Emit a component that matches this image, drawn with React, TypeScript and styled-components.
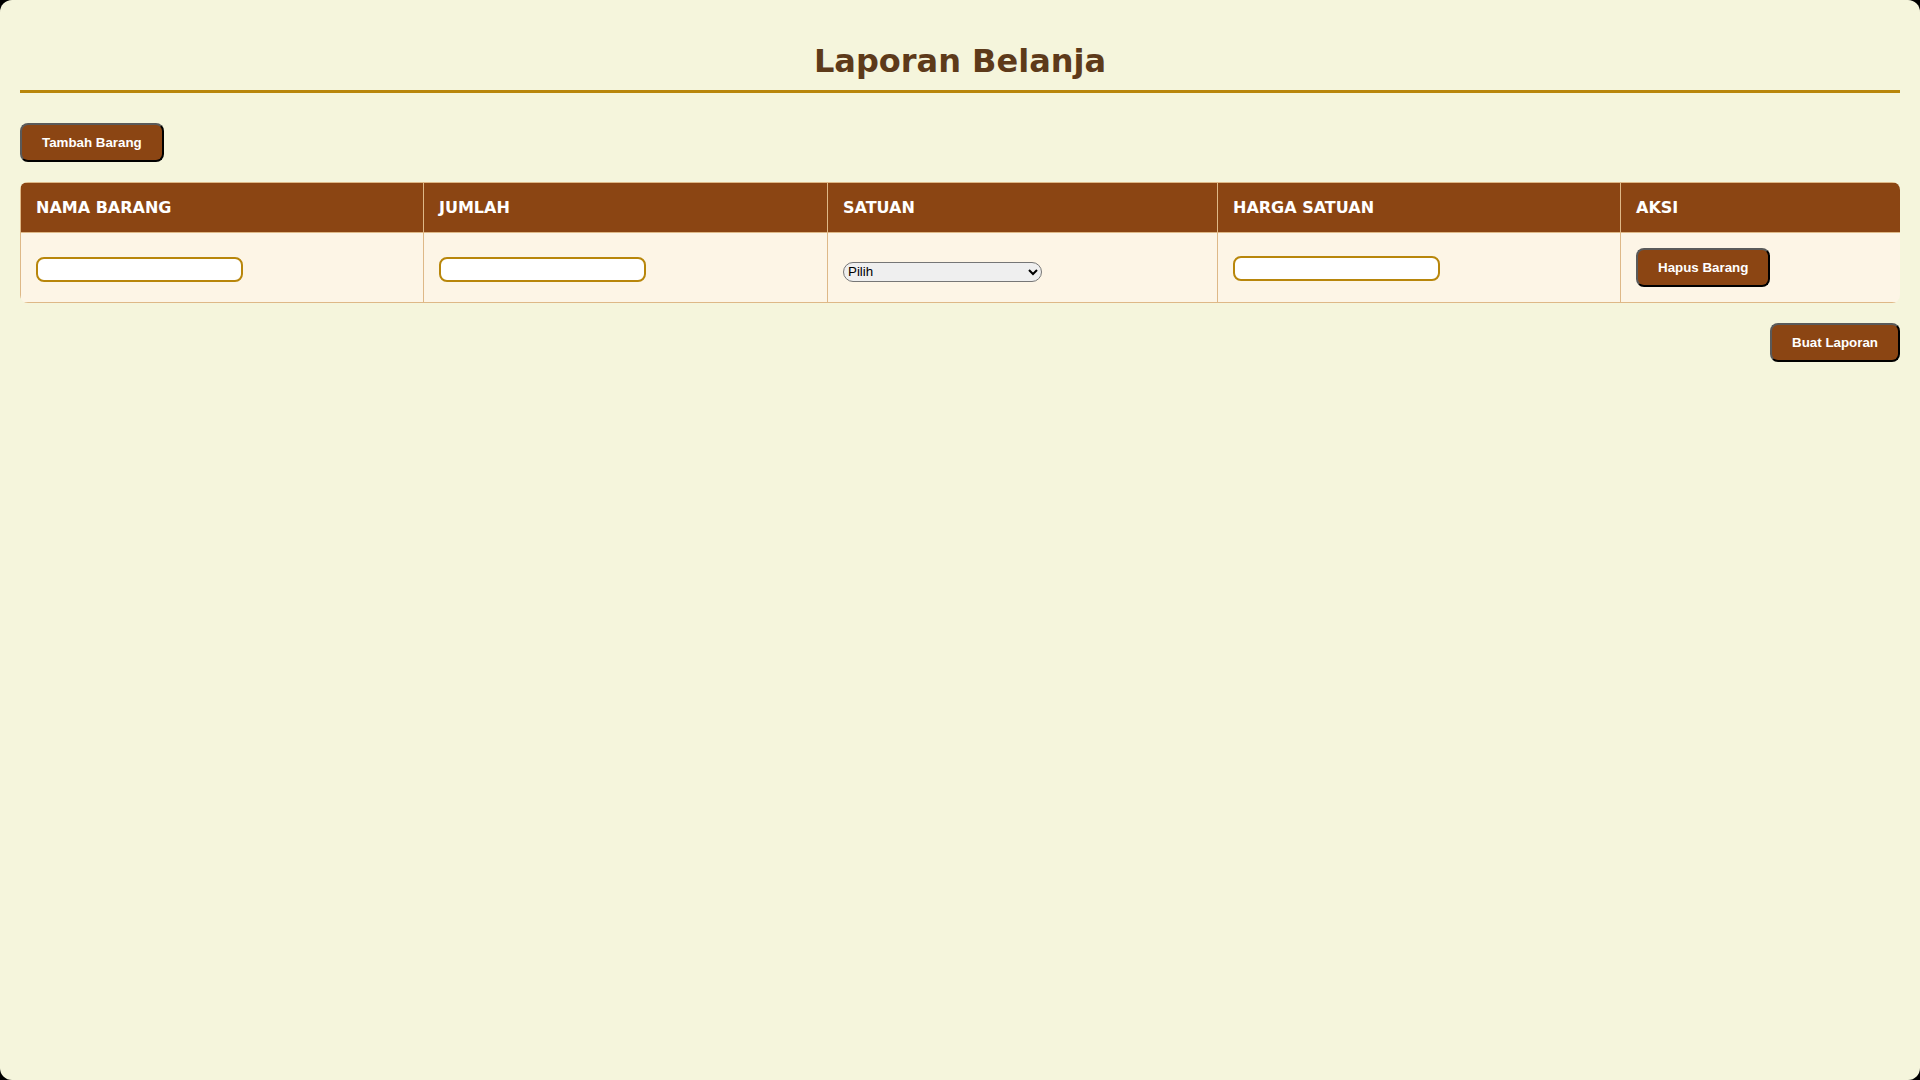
import React from "react";
import styled, { createGlobalStyle } from "styled-components";

const GlobalStyle = createGlobalStyle`
  html {
    background: #000;
  }
  body {
    margin: 0;
    min-height: 100vh;
    background: #f5f5dc;
    border-radius: 12px;
    font-family: Verdana, "DejaVu Sans", sans-serif;
    font-size: 16px;
    color: #333;
  }
`;

const Page = styled.div`
  padding: 20px;
`;

const Title = styled.h1`
  margin: 22px 0 30px;
  padding-bottom: 10px;
  border-bottom: 3px solid #b8860b;
  text-align: center;
  font-size: 32px;
  font-weight: bold;
  color: #5d3a1a;
`;

const Button = styled.button`
  display: inline-block;
  padding: 10px 20px;
  background: #8b4513;
  color: #fff;
  font-family: Arial, "Liberation Sans", sans-serif;
  font-size: 13.333px;
  font-weight: bold;
  line-height: normal;
  border: 2px solid;
  border-color: #5a5a5a #000 #000 #5a5a5a;
  border-radius: 8px;
  cursor: pointer;
`;

const TableWrap = styled.div`
  margin-top: 20px;
  border-radius: 8px;
  overflow: hidden;
`;

const Table = styled.table`
  width: 100%;
  border-collapse: collapse;
  table-layout: fixed;
`;

const Th = styled.th`
  padding: 15px;
  text-align: left;
  font-size: 16px;
  font-weight: bold;
  text-transform: uppercase;
  color: #fff;
  background: #8b4513;
  border: 1px solid #deb887;
`;

const Td = styled.td`
  padding: 15px;
  background: #fdf5e6;
  border: 1px solid #deb887;
  vertical-align: middle;
`;

const TextInput = styled.input`
  display: block;
  box-sizing: border-box;
  width: 207px;
  height: 25px;
  margin-top: 3px;
  padding: 3px 6px;
  border: 2px solid #b8860b;
  border-radius: 8px;
  background: #fff;
  font-family: Arial, "Liberation Sans", sans-serif;
  font-size: 13.333px;
  outline: none;
`;

const Select = styled.select`
  display: block;
  box-sizing: border-box;
  width: 199px;
  height: 20px;
  margin-top: 8px;
  border: 1px solid #767676;
  border-radius: 10px;
  background-color: #efefef;
  color: #000;
  font-family: Arial, "Liberation Sans", sans-serif;
  font-size: 13.333px;
`;

const Footer = styled.div`
  display: flex;
  justify-content: flex-end;
  margin-top: 20px;
`;

const columns = [
  { label: "Nama Barang", width: 403 },
  { label: "Jumlah", width: 404 },
  { label: "Satuan", width: 390 },
  { label: "Harga Satuan", width: 403 },
  { label: "Aksi", width: 280 },
];

export default function App() {
  return (
    <>
      <GlobalStyle />
      <Page>
        <Title>Laporan Belanja</Title>
        <Button type="button">Tambah Barang</Button>
        <TableWrap>
          <Table>
            <colgroup>
              {columns.map((c) => (
                <col key={c.label} style={{ width: c.width }} />
              ))}
            </colgroup>
            <thead>
              <tr>
                {columns.map((c) => (
                  <Th key={c.label}>{c.label}</Th>
                ))}
              </tr>
            </thead>
            <tbody>
              <tr>
                <Td>
                  <TextInput type="text" />
                </Td>
                <Td>
                  <TextInput type="number" />
                </Td>
                <Td>
                  <Select defaultValue="">
                    <option value="">Pilih</option>
                    <option value="kg">Kilogram</option>
                    <option value="liter">Liter</option>
                    <option value="pcs">Pcs</option>
                  </Select>
                </Td>
                <Td>
                  <TextInput type="number" style={{ marginTop: 1 }} />
                </Td>
                <Td>
                  <Button type="button">Hapus Barang</Button>
                </Td>
              </tr>
            </tbody>
          </Table>
        </TableWrap>
        <Footer>
          <Button type="button">Buat Laporan</Button>
        </Footer>
      </Page>
    </>
  );
}
